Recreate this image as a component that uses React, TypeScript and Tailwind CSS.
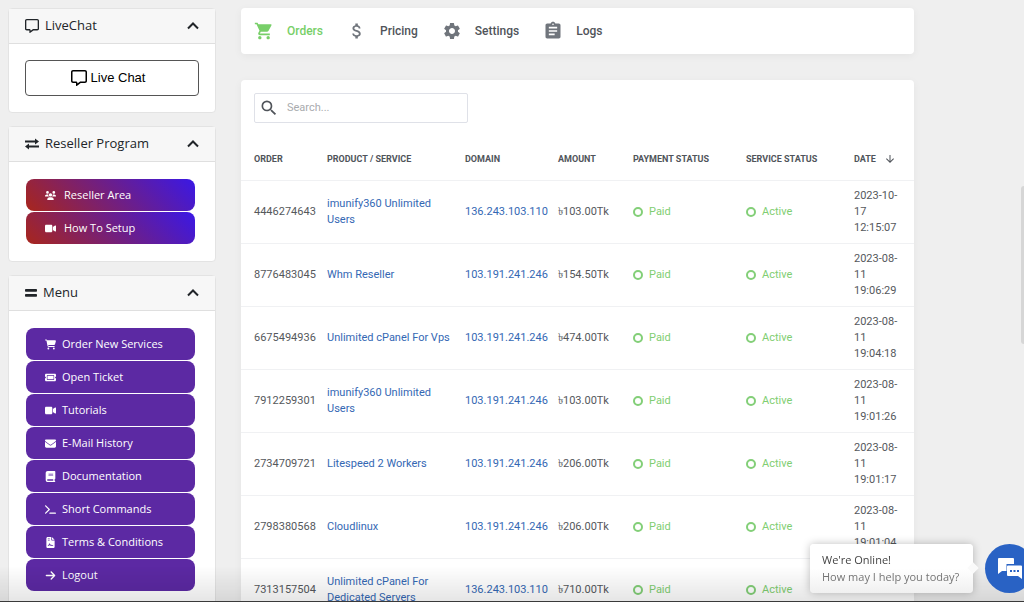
import type { ComponentType, ReactNode } from "react";
import {
  FaArrowRight,
  FaBook,
  FaCartShopping,
  FaEnvelope,
  FaFileContract,
  FaRegMessage,
  FaTerminal,
  FaTicket,
  FaUsers,
  FaVideo,
} from "react-icons/fa6";
import { MdArrowDownward, MdAssignment, MdAttachMoney, MdSearch, MdSettings, MdShoppingCart } from "react-icons/md";

type Icon = ComponentType<{ className?: string }>;

interface Order {
  id: string;
  product: string;
  domain: string;
  amount: string;
  month: string;
  day: string;
  time: string;
}
interface MenuItem { label: string; icon: Icon; }

const orders: Order[] = [
  { id: "4446274643", product: "imunify360 Unlimited Users", domain: "136.243.103.110", amount: "৳103.00Tk", month: "2023-10-", day: "17", time: "12:15:07" },
  { id: "8776483045", product: "Whm Reseller", domain: "103.191.241.246", amount: "৳154.50Tk", month: "2023-08-", day: "11", time: "19:06:29" },
  { id: "6675494936", product: "Unlimited cPanel For Vps", domain: "103.191.241.246", amount: "৳474.00Tk", month: "2023-08-", day: "11", time: "19:04:18" },
  { id: "7912259301", product: "imunify360 Unlimited Users", domain: "103.191.241.246", amount: "৳103.00Tk", month: "2023-08-", day: "11", time: "19:01:26" },
  { id: "2734709721", product: "Litespeed 2 Workers", domain: "103.191.241.246", amount: "৳206.00Tk", month: "2023-08-", day: "11", time: "19:01:17" },
  { id: "2798380568", product: "Cloudlinux", domain: "103.191.241.246", amount: "৳206.00Tk", month: "2023-08-", day: "11", time: "19:01:04" },
  { id: "7313157504", product: "Unlimited cPanel For Dedicated Servers", domain: "136.243.103.110", amount: "৳710.00Tk", month: "2023-08-", day: "11", time: "18:48:31" },
];

const resellerItems: MenuItem[] = [
  { label: "Reseller Area", icon: FaUsers },
  { label: "How To Setup", icon: FaVideo },
];

const menuItems: MenuItem[] = [
  { label: "Order New Services", icon: FaCartShopping },
  { label: "Open Ticket", icon: FaTicket },
  { label: "Tutorials", icon: FaVideo },
  { label: "E-Mail History", icon: FaEnvelope },
  { label: "Documentation", icon: FaBook },
  { label: "Short Commands", icon: FaTerminal },
  { label: "Terms & Conditions", icon: FaFileContract },
  { label: "Logout", icon: FaArrowRight },
];

const tabs: MenuItem[] = [
  { label: "Orders", icon: MdShoppingCart },
  { label: "Pricing", icon: MdAttachMoney },
  { label: "Settings", icon: MdSettings },
  { label: "Logs", icon: MdAssignment },
];

function ExchangeIcon({ className }: { className?: string }) {
  return (
    <svg viewBox="0 0 14 14" className={className} fill="currentColor">
      <path d="M0 3.6h10V1.5l4 3-4 3V5.4H0zM14 8.6H4V6.5l-4 3 4 3v-2.1h10z" />
    </svg>
  );
}

function BarsIcon({ className }: { className?: string }) {
  return (
    <svg viewBox="0 0 12 14" className={className} fill="currentColor">
      <rect y="3" width="12" height="2.8" rx="0.8" />
      <rect y="8" width="12" height="2.8" rx="0.8" />
    </svg>
  );
}

function Panel({ title, icon: Icon, children }: { title: string; icon: Icon; children: ReactNode }) {
  return (
    <section className="rounded-sm border border-[#e3e3e3] bg-white">
      <h2 className="flex h-[35px] items-center gap-1.5 border-b border-[#dfdfdf] bg-[#f7f7f7] px-4 text-[13px] text-[#212529]">
        <Icon className="h-3.5 w-auto" />
        <span className="flex-1">{title}</span>
        <button type="button" aria-label={`Collapse ${title}`}>
          <svg viewBox="0 0 12 12" className="size-3" fill="none" stroke="currentColor" strokeWidth="2">
            <path d="M1 8.5l5-5 5 5" />
          </svg>
        </button>
      </h2>
      {children}
    </section>
  );
}

function SideLink({ item, className }: { item: MenuItem; className: string }) {
  const Icon = item.icon;
  return (
    <li>
      <a href="#" className={`flex h-8 items-center rounded-lg px-[19px] text-[11px] text-white ${className}`}>
        <Icon className="h-[11px] w-auto" />
        {item.label}
      </a>
    </li>
  );
}

function Status({ label }: { label: string }) {
  return (
    <span className="flex items-center gap-1.5 text-[#7fce72]">
      <span className="size-2.5 rounded-full border-2 border-[#83cf78]" />
      {label}
    </span>
  );
}

function Sidebar() {
  return (
    <aside className="flex w-52 shrink-0 flex-col gap-[13px]">
      <Panel title="LiveChat" icon={FaRegMessage}>
        <div className="p-4">
          <button type="button" className="flex h-9 w-full items-center justify-center gap-1 rounded border border-[#555] pr-2 font-['Liberation_Sans',sans-serif] text-[13px] text-black">
            <FaRegMessage className="size-4" />
            Live Chat
          </button>
        </div>
      </Panel>

      <Panel title="Reseller Program" icon={ExchangeIcon}>
        <ul className="flex flex-col gap-px py-[17px] pr-5 pl-[17px]">
          {resellerItems.map((item) => (
            <SideLink key={item.label} item={item} className="gap-2 bg-[linear-gradient(45deg,#a8261c,#3a18e6)]" />
          ))}
        </ul>
      </Panel>

      <Panel title="Menu" icon={BarsIcon}>
        <ul className="flex flex-col gap-px py-[17px] pr-5 pl-[17px]">
          {menuItems.map((item) => (
            <SideLink key={item.label} item={item} className="gap-1.5 bg-[#5c29a3]" />
          ))}
        </ul>
      </Panel>
    </aside>
  );
}

function OrdersTable() {
  return (
    <table className="mt-4 w-full table-fixed text-left text-[11px] leading-4 text-[#55585c]">
      <thead>
        <tr className="h-[41px] border-b border-[#f0f1f3] text-[9px] text-[#50545a]">
          <th className="w-[86px] pl-[13px]">ORDER</th>
          <th>PRODUCT / SERVICE</th>
          <th className="w-[93px]">DOMAIN</th>
          <th className="w-[75px]">AMOUNT</th>
          <th className="w-[113px]">PAYMENT STATUS</th>
          <th className="w-[108px]">SERVICE STATUS</th>
          <th className="w-[60px]">
            <button type="button" className="flex items-center gap-2">
              DATE <MdArrowDownward className="size-3" />
            </button>
          </th>
        </tr>
      </thead>
      <tbody>
        {orders.map((o) => (
          <tr key={o.id} className="h-[63px] border-b border-[#f0f1f3]">
            <td className="pl-[13px]">{o.id}</td>
            <td className="pr-2"><a href="#" className="text-[#3468b4]">{o.product}</a></td>
            <td><a href="#" className="text-[#3468b4]">{o.domain}</a></td>
            <td>{o.amount}</td>
            <td><Status label="Paid" /></td>
            <td><Status label="Active" /></td>
            <td className="pr-[11px]">{o.month}<wbr />{o.day} {o.time}</td>
          </tr>
        ))}
      </tbody>
    </table>
  );
}

function ChatWidget() {
  return (
    <div className="fixed -right-2.5 bottom-[9px] flex items-center gap-3">
      <div className="relative w-[163px] rounded bg-linear-to-b from-white from-50% to-[#f0f0f0] px-3 py-2 shadow-[0_0_8px_rgba(0,0,0,0.25)]">
        <p className="text-[11px] leading-4 text-[#444]">We're Online!</p>
        <p className="text-[11px] leading-[17px] text-[#757575]">How may I help you today?</p>
        <span className="absolute top-5 -right-1 size-2 rotate-45 bg-[#fafafa]" />
      </div>
      <button type="button" aria-label="Open chat" className="flex size-[49px] items-center justify-center rounded-full bg-[#2962c4]">
        <svg viewBox="0 0 26 24" className="h-6 w-[26px]">
          <path d="M2 1h14a1 1 0 0 1 1 1v5H9.5v7H5l-4 3V2a1 1 0 0 1 1-1z" fill="#fff" />
          <path d="M11 8.5h13a1 1 0 0 1 1 1V22l-4-3H11a1 1 0 0 1-1-1V9.5a1 1 0 0 1 1-1z" fill="#fff" />
          <path d="M13 13h2v2h-2zM16.5 13h2v2h-2zM20 13h2v2h-2z" fill="#2962c4" />
        </svg>
      </button>
    </div>
  );
}

export default function App() {
  return (
    <div className="h-screen overflow-y-auto bg-[#efefef] font-['Open_Sans',sans-serif] [scrollbar-width:none]">
      <div className="flex items-start gap-[25px] pt-2 pr-[110px] pl-2">
        <Sidebar />
        <main className="flex min-w-0 flex-1 flex-col gap-[26px] font-['Roboto','Noto_Sans',sans-serif]">
          <nav className="flex h-[46px] items-center gap-6 rounded-sm bg-white px-[13px] shadow-[0_2px_8px_rgba(0,0,0,0.05)]">
            {tabs.map(({ label, icon: Icon }, i) => (
              <a key={label} href="#" className={`flex items-center gap-[13px] text-xs font-medium ${i === 0 ? "text-[#78cf69]" : "text-[#50545a]"}`}>
                <Icon className={`size-5 ${i === 0 ? "" : "text-[#70757c]"}`} />
                {label}
              </a>
            ))}
          </nav>

          <section className="rounded-sm bg-white pt-[13px] shadow-[0_2px_8px_rgba(0,0,0,0.05)]">
            <label className="ml-[13px] flex h-[30px] w-[214px] items-center gap-2 rounded-xs border border-[#dfe1e8] px-1">
              <MdSearch className="size-5 shrink-0 text-[#50545a]" />
              <input type="text" aria-label="Search orders" placeholder="Search..." className="w-full min-w-0 text-[11px] outline-none placeholder:text-[#a9abae]" />
            </label>
            <OrdersTable />
          </section>
        </main>
      </div>

      <div className="fixed top-[186px] right-0 h-[158px] w-[3px] rounded-l-sm bg-[#d6d6d6]" />
      <div className="pointer-events-none fixed inset-x-0 bottom-0 h-9 border-b border-[#3a3a3a] bg-linear-to-b from-transparent to-black/10" />
      <ChatWidget />
    </div>
  );
}
